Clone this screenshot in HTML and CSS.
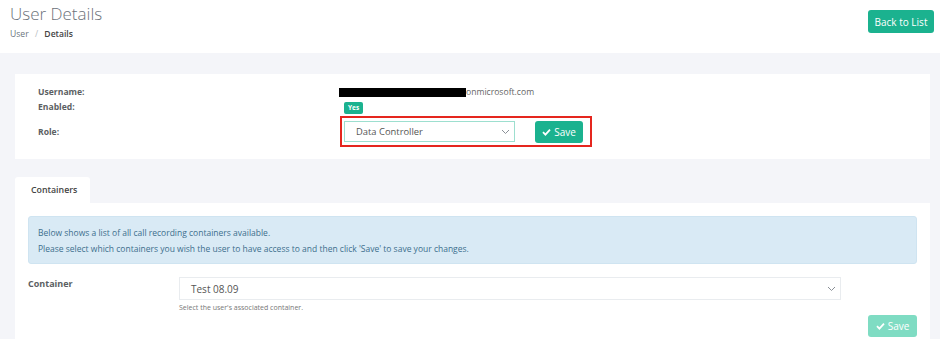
FILE: index.html
```html
<!DOCTYPE html>
<html lang="en">
<head>
    <meta charset="UTF-8">
    <meta name="viewport" content="width=device-width, initial-scale=1.0">
    <title>User Details</title>
    <link rel="stylesheet" href="styles.css">
</head>
<body>
    <header class="page-header">
        <div class="title-block">
            <h1>User Details</h1>
            <div class="breadcrumb">
                <span class="crumb">User</span>
                <span class="sep">/</span>
                <span class="crumb active">Details</span>
            </div>
        </div>
        <button class="btn btn-back">Back to List</button>
    </header>

    <main class="content">
        <section class="card user-card">
            <div class="detail-row">
                <span class="label">Username:</span>
                <span class="value email"><span class="redacted"></span>onmicrosoft.com</span>
            </div>
            <div class="detail-row">
                <span class="label">Enabled:</span>
                <span class="value"><span class="badge">Yes</span></span>
            </div>
            <div class="detail-row">
                <span class="label">Role:</span>
                <div class="value">
                    <div class="role-box">
                        <div class="select role-select">
                            <span>Data Controller</span>
                            <svg width="9" height="6" viewBox="0 0 9 6"><path d="M1 1l3.5 3.5L8 1" fill="none" stroke="#8a8f96" stroke-width="1"/></svg>
                        </div>
                        <button class="btn btn-save">
                            <svg width="9" height="8" viewBox="0 0 9 8"><path d="M1 4.2l2.4 2.4L8 1.6" fill="none" stroke="#fff" stroke-width="1.8"/></svg>
                            Save
                        </button>
                    </div>
                </div>
            </div>
        </section>

        <div class="tabs">
            <div class="tab active">Containers</div>
        </div>
        <section class="tab-panel">
            <div class="alert">
                <p>Below shows a list of all call recording containers available.</p>
                <p>Please select which containers you wish the user to have access to and then click 'Save' to save your changes.</p>
            </div>
            <div class="form-row">
                <label class="form-label">Container</label>
                <div class="form-field">
                    <div class="select container-select">
                        <span>Test 08.09</span>
                        <svg width="9" height="6" viewBox="0 0 9 6"><path d="M1 1l3.5 3.5L8 1" fill="none" stroke="#8a8f96" stroke-width="1"/></svg>
                    </div>
                    <small class="help">Select the user's associated container.</small>
                </div>
            </div>
            <div class="actions">
                <button class="btn btn-save disabled">
                    <svg width="9" height="8" viewBox="0 0 9 8"><path d="M1 4.2l2.4 2.4L8 1.6" fill="none" stroke="#fff" stroke-width="1.8"/></svg>
                    Save
                </button>
            </div>
        </section>
    </main>
</body>
</html>
```

FILE: styles.css
```css
body {
    font-family: 'Open Sans', 'Noto Sans', sans-serif;
    margin: 0;
    padding: 0;
    background-color: #f4f5f9;
    color: #555;
    width: 940px;
    height: 339px;
    overflow: hidden;
}

.page-header {
    background: white;
    height: 53px;
    display: flex;
    justify-content: space-between;
    align-items: flex-start;
    padding: 0 6px 0 10px;
    box-sizing: border-box;
}

.title-block h1 {
    margin: 3px 0 0;
    font-size: 17px;
    font-weight: 300;
    line-height: 22px;
    color: #6c727a;
}

.breadcrumb {
    font-size: 8.6px;
    margin-top: 3px;
    color: #6c757d;
}

.breadcrumb .sep {
    color: #b8bcc2;
    margin: 0 4px;
}

.breadcrumb .active {
    font-weight: 600;
    color: #444;
}

.btn {
    font-family: 'Open Sans', 'Noto Sans', sans-serif;
    border: none;
    border-radius: 3px;
    color: white;
    background-color: #1bb28f;
    cursor: pointer;
    padding: 0;
}

.btn-back {
    margin-top: 10px;
    width: 66px;
    height: 23px;
    font-size: 10px;
}

.content {
    padding: 21px 10px 0 15px;
}

.card {
    background: white;
    width: 915px;
    box-sizing: border-box;
}

.user-card {
    padding: 12px 23px 12px;
    height: 85px;
}

.detail-row {
    display: grid;
    grid-template-columns: 301px 1fr;
    align-items: center;
    font-size: 8.6px;
}

.detail-row:nth-child(1) {
    height: 12px;
}

.detail-row:nth-child(2) {
    height: 18px;
}

.label {
    font-weight: 700;
    color: #5c5f63;
}

.email {
    color: #666;
    display: flex;
    align-items: center;
}

.redacted {
    display: inline-block;
    width: 127px;
    height: 9px;
    background: #000;
}

.badge {
    display: inline-block;
    margin-left: 5px;
    background-color: #1bb28f;
    color: white;
    font-size: 6.5px;
    font-weight: 700;
    padding: 0 4px;
    height: 12px;
    line-height: 12px;
    border-radius: 2px;
}

.role-box {
    display: flex;
    align-items: center;
    gap: 20px;
    width: 252px;
    height: 31px;
    border: 2px solid #e5261e;
    box-sizing: border-box;
    margin-left: 1px;
    padding: 0 7px 0 2px;
}

.select {
    display: flex;
    justify-content: space-between;
    align-items: center;
    background: white;
    box-sizing: border-box;
    color: #555;
}

.role-select {
    width: 171px;
    height: 21px;
    border: 1px solid #9ddfcf;
    padding: 0 4px 0 11px;
    font-size: 9.4px;
}

.btn-save {
    display: flex;
    align-items: center;
    justify-content: center;
    gap: 3px;
    width: 48px;
    height: 22px;
    font-size: 10px;
}

.tabs {
    display: flex;
    margin-top: 18px;
}

.tab {
    background: white;
    width: 75px;
    height: 26px;
    line-height: 26px;
    padding-left: 16px;
    box-sizing: border-box;
    font-size: 8.8px;
    font-weight: 600;
    color: #444;
    border-radius: 3px 3px 0 0;
}

.tab-panel {
    background: white;
    width: 915px;
    height: 140px;
    padding: 13px 13px 0;
    box-sizing: border-box;
}

.alert {
    background-color: #d9eaf5;
    border: 1px solid #cfe4f1;
    border-radius: 3px;
    padding: 8px 9px 7px;
    color: #3d6f8d;
    font-size: 8.5px;
    height: 48px;
    box-sizing: border-box;
}

.alert p {
    margin: 0;
    line-height: 16px;
}

.form-row {
    display: grid;
    grid-template-columns: 151px 662px;
    margin-top: 13px;
}

.form-label {
    font-size: 9px;
    font-weight: 700;
    color: #5c5f63;
    line-height: 14px;
}

.container-select {
    height: 23px;
    border: 1px solid #e9ecef;
    padding: 0 4px 0 11px;
    font-size: 10px;
}

.help {
    display: block;
    font-size: 7px;
    color: #777;
    margin-top: 3px;
}

.actions {
    display: flex;
    justify-content: flex-end;
    margin-top: 3px;
}

.btn-save.disabled {
    background-color: #7fdcc3;
    width: 49px;
}
```
